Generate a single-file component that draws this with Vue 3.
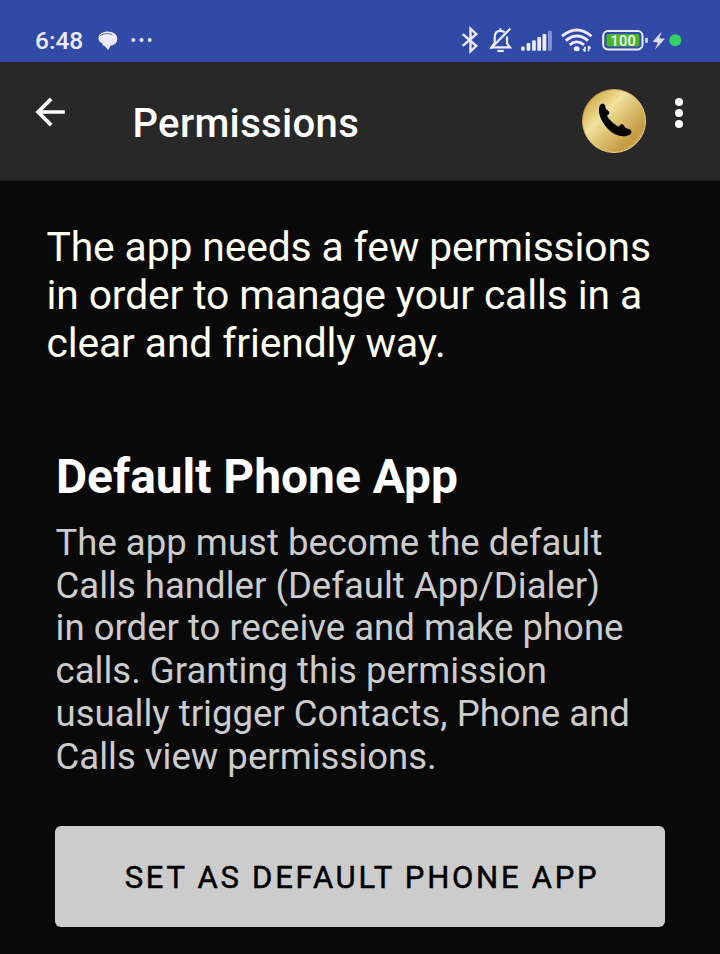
<script setup>
const introLines = [
  'The app needs a few permissions',
  'in order to manage your calls in a',
  'clear and friendly way.',
]
const detailLines = [
  'The app must become the default',
  'Calls handler (Default App/Dialer)',
  'in order to receive and make phone',
  'calls. Granting this permission',
  'usually trigger Contacts, Phone and',
  'Calls view permissions.',
]
</script>

<template>
  <div class="screen">
    <header class="status">
      <div class="status-left">
        <span class="clock">6:48</span>
        <svg class="chat" width="20" height="20" viewBox="0 0 20 20">
          <path d="M10 0.500C15.200 0.500 19.300 3.400 19.300 8C19.300 11.800 16.200 14.300 12.500 14.800L10.300 19L6.800 15.200C5 14.800 4.300 13.700 4.200 12.300C1.800 11.300 0.500 9.500 0.500 6.700C0.500 3 4.800 0.500 10 0.500Z" fill="#ecebff" />
          <path d="M1.800 5.200C4 2.700 9 2 14.400 3.400" fill="none" stroke="#4e5b9f" stroke-width="0.900" />
        </svg>
        <svg class="more-notes" width="22" height="6" viewBox="0 0 22 6" fill="#ecebff">
          <circle cx="2.300" cy="3" r="2" />
          <circle cx="10.500" cy="3" r="2" />
          <circle cx="18.700" cy="3" r="2" />
        </svg>
      </div>
      <svg class="status-right" width="224" height="32" viewBox="460 24 224 32">
        <path d="M462.700 34.200 476.300 45.800 470.500 51.300V28.700L476.300 34.200 462.700 45.800" fill="none" stroke="#ecebff" stroke-width="2.400" />
        <g fill="none" stroke="#ecebff" stroke-width="2.200">
          <path d="M494.700 43V37.300C494.700 33 497 30.800 500.500 30.800C502.300 30.800 503.700 31.400 504.700 32.500M507 36.500V43.500L510 47.400H491.500L494.700 43" />
          <path d="M510.300 28.600 490.800 48.500" />
          <path d="M500.500 28.300v2.500" />
          <path d="M497.300 51h6.500" />
        </g>
        <g fill="#ecebff">
          <rect x="521.200" y="46.500" width="3.400" height="4.200" rx="1" />
          <rect x="526.600" y="43" width="3.700" height="7.700" rx="1" />
          <rect x="532.100" y="40.300" width="3.700" height="10.400" rx="1" />
          <rect x="537.300" y="37" width="3.700" height="13.700" rx="1" />
          <rect x="542.500" y="34" width="3.800" height="16.700" rx="1" />
          <rect x="548" y="30.800" width="3.900" height="19.900" rx="1" opacity="0.45" />
        </g>
        <g fill="none" stroke="#ecebff" stroke-width="2.800">
          <path d="M562 36.200Q577 23.800 591.500 36.200" />
          <path d="M565.800 40.600Q577 31.400 588 40.600" />
          <path d="M569.600 44.800Q576.800 39 584 44.800" />
        </g>
        <ellipse cx="576.700" cy="48.700" rx="3" ry="2.500" fill="#ecebff" />
        <path d="M585 51.700v-5M583 49l2 2.500M588.600 46v5.200M588.600 46.200l2 2.400" fill="none" stroke="#ecebff" stroke-width="1.600" />
        <rect x="603.200" y="31" width="39.300" height="18.400" rx="4.800" fill="none" stroke="#ecebff" stroke-width="2" />
        <rect x="606.400" y="34" width="33" height="12.600" rx="2" fill="#48b52b" />
        <text x="623.300" y="45.600" text-anchor="middle" class="battery-text">100</text>
        <rect x="645.300" y="37.800" width="2.400" height="5.200" rx="0.800" fill="#ecebff" />
        <path d="M661.800 31.400 652.600 41.800 658 42.400 655 49.400 665 38.700 659.200 38.200Z" fill="#dedcf5" />
        <circle cx="675.300" cy="40.300" r="6" fill="#35d065" />
      </svg>
    </header>

    <nav class="toolbar">
      <svg class="back" width="32" height="32" viewBox="0 0 32 32">
        <path d="M30.800 16H4M17.200 2.900 4.100 16l13.100 13.100" fill="none" stroke="#fff" stroke-width="3.700" />
      </svg>
      <h1 class="title">Permissions</h1>
      <svg class="dialer" width="66" height="66" viewBox="0 0 66 66">
        <defs>
          <linearGradient id="gold" x1="0.080" y1="0.100" x2="0.920" y2="0.900">
            <stop offset="0" stop-color="#cda64e" />
            <stop offset="0.160" stop-color="#dfc26d" />
            <stop offset="0.340" stop-color="#f2e29c" />
            <stop offset="0.550" stop-color="#dcc072" />
            <stop offset="0.850" stop-color="#c49a43" />
            <stop offset="1" stop-color="#d9b968" />
          </linearGradient>
          <linearGradient id="rim" x1="0" y1="0" x2="1" y2="1">
            <stop offset="0" stop-color="#ab7c28" />
            <stop offset="0.500" stop-color="#e5c674" />
            <stop offset="1" stop-color="#f5dda0" />
          </linearGradient>
        </defs>
        <circle cx="33" cy="33" r="31.500" fill="url(#gold)" stroke="url(#rim)" stroke-width="1" />
        <path d="M18.800 17.500C20 15.300 22.800 15.300 24 17.300L24.800 20.800L28.200 23.800C28.800 25.300 27.600 27.300 25.900 27.600C28 31.800 33 36.300 38 38.800C38.300 36.800 40.200 35.700 42 36.500L44.700 39.900L49 41.600C51 42.600 51 45.300 49 46.500C45.300 49 39.400 48.800 34.300 46.300C26.500 42.500 19.300 32.600 18.100 24.700C17.800 22 17.900 19.300 18.800 17.500Z" fill="#030303" />
      </svg>
      <svg class="menu" width="10" height="32" viewBox="0 0 10 32" fill="#fff">
        <circle cx="5" cy="5" r="4" />
        <circle cx="5" cy="16" r="4" />
        <circle cx="5" cy="27" r="4" />
      </svg>
    </nav>

    <main class="content">
      <p class="intro">
        <span v-for="line in introLines" :key="line" class="line">{{ line }}</span>
      </p>
      <section class="permission">
        <h2 class="heading">Default Phone App</h2>
        <p class="detail">
          <span v-for="line in detailLines" :key="line" class="line">{{ line }}</span>
        </p>
        <button class="action" type="button">SET AS DEFAULT PHONE APP</button>
      </section>
    </main>
  </div>
</template>

<style>
body {
  background: #090909;
}
</style>

<style scoped>
.screen {
  width: 720px;
  height: 954px;
  overflow: hidden;
  background: #090909;
  font-family: Roboto, sans-serif;
  box-sizing: border-box;
}
.status {
  height: 62px;
  box-sizing: border-box;
  padding: 24px 36px 0 35px;
  display: flex;
  justify-content: space-between;
  align-items: flex-start;
  background: #314aa8;
}
.status-left {
  display: flex;
  align-items: center;
  height: 34px;
}
.clock {
  width: 63px;
  font-size: 24.500px;
  font-weight: 500;
  line-height: 34px;
  color: #ecebff;
}
.more-notes {
  margin: -2px 0 0 13px;
}
.battery-text {
  font: 500 14.500px Roboto, sans-serif;
  letter-spacing: 0.300px;
  fill: #f3f6ff;
}
.toolbar {
  height: 119px;
  box-sizing: border-box;
  padding: 27px 36px 0 34px;
  display: flex;
  align-items: flex-start;
  background: #282828;
  border-bottom: 1px solid #1a1a1a;
}
.back {
  margin-top: 7px;
}
.title {
  margin: 11px 0 0 66.500px;
  font-size: 40px;
  font-weight: 500;
  line-height: 48px;
  letter-spacing: 0.350px;
  color: #fff;
}
.dialer {
  margin: -1px 0 0 auto;
}
.menu {
  margin: 8px 0 0 27px;
}
.content {
  padding: 42px 55px 0 46px;
}
.line {
  display: block;
  white-space: nowrap;
}
.intro {
  margin: 0 0 0 0.500px;
  font-size: 40.800px;
  line-height: 48px;
  letter-spacing: -0.120px;
  color: #fffff0;
}
.permission {
  padding: 83px 0 0 9px;
}
.heading {
  margin: 0 0 0 1px;
  font-size: 47.900px;
  font-weight: 700;
  line-height: 55px;
  color: #fff;
}
.detail {
  margin: 17px 0 0 0.500px;
  font-size: 36.500px;
  line-height: 42.700px;
  letter-spacing: 0.020px;
  color: #ccc;
}
.action {
  display: block;
  width: 610px;
  height: 101px;
  margin: 48px 0 0;
  padding: 2px 0 0 4px;
  border: 0;
  border-radius: 6px;
  background: #ccc;
  color: #000;
  font-family: Roboto, sans-serif;
  font-size: 31px;
  font-weight: 400;
  -webkit-text-stroke: 0.500px #000;
  letter-spacing: 2.750px;
}
</style>
